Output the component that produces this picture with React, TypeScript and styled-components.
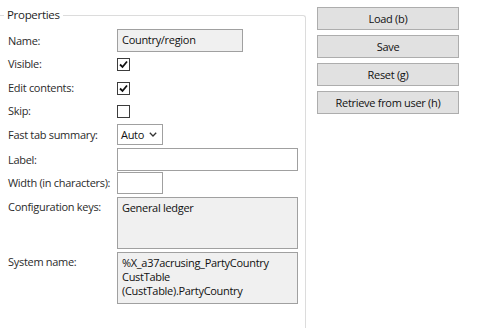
import * as React from 'react'
import styled, { createGlobalStyle } from 'styled-components'

const GlobalStyle = createGlobalStyle`
  html, body {
    margin: 0;
    padding: 0;
    background: #ffffff;
    overflow: hidden;
  }
  body {
    font-family: 'Open Sans', 'Noto Sans', sans-serif;
    font-size: 11px;
    letter-spacing: -0.3px;
    color: #1e1e1e;
  }
`

const Page = styled.div`
  display: flex;
  align-items: flex-start;
  gap: 11px;
  padding-top: 7px;
  width: 478px;
  height: 328px;
  box-sizing: border-box;
  overflow: hidden;
`

const Group = styled.fieldset`
  margin: 0;
  padding: 0 0 0 8px;
  width: 306px;
  height: 321px;
  box-sizing: border-box;
  border: 1px solid #dcdcdc;
  border-left: none;
  border-bottom: none;
  border-top-right-radius: 3px;
  min-inline-size: 0;
`

const Legend = styled.legend`
  margin-left: -4px;
  padding: 0 3px;
  font-size: 11.5px;
  line-height: 16px;
  color: #1e1e1e;
`

const Row = styled.div<{ $h: number; $mt: number; $top?: boolean }>`
  display: grid;
  grid-template-columns: 109px 1fr;
  align-items: ${(p) => (p.$top ? 'start' : 'center')};
  height: ${(p) => p.$h}px;
  margin-top: ${(p) => p.$mt}px;
`

const Label = styled.span<{ $top?: boolean }>`
  line-height: 14px;
  white-space: nowrap;
  color: #2b2b2b;
  padding-top: ${(p) => (p.$top ? 3 : 0)}px;
`

const TextBox = styled.div<{ $w?: number; $ro?: boolean; $h: number }>`
  box-sizing: border-box;
  width: ${(p) => (p.$w ? `${p.$w}px` : '181px')};
  height: ${(p) => p.$h}px;
  border: 1px solid #a0a0a0;
  background: ${(p) => (p.$ro ? '#f0f0f0' : '#ffffff')};
  padding: 3px 4px 0 4px;
  line-height: 14px;
  color: #111;
`

const Select = styled.div`
  box-sizing: border-box;
  width: 46px;
  height: 21px;
  border: 1px solid #a0a0a0;
  background: #ffffff;
  display: flex;
  align-items: center;
  justify-content: space-between;
  padding: 0 5px 0 3px;
  color: #111;
`

const Box = styled.span`
  box-sizing: border-box;
  width: 13px;
  height: 13px;
  border: 1px solid #3c3c3c;
  background: #ffffff;
  display: flex;
  align-items: center;
  justify-content: center;
`

const Buttons = styled.div`
  display: flex;
  flex-direction: column;
  gap: 5px;
  width: 142px;
`

const Button = styled.button`
  box-sizing: border-box;
  height: 23px;
  margin: 0;
  padding: 0;
  border: 1px solid #adadad;
  background: #e1e1e1;
  font-family: inherit;
  font-size: 11px;
  letter-spacing: inherit;
  color: #111;
`

const CheckBox = ({ checked }: { checked: boolean }) => (
  <Box>
    {checked && (
      <svg width="9" height="9" viewBox="0 0 9 9">
        <path d="M1 4.5 L3.5 7 L8 1.5" fill="none" stroke="#111" strokeWidth="1.8" />
      </svg>
    )}
  </Box>
)

const Chevron = () => (
  <svg width="8" height="5" viewBox="0 0 8 5">
    <path d="M0.8 0.8 L4 4 L7.2 0.8" fill="none" stroke="#333" strokeWidth="1.3" />
  </svg>
)

export default function App() {
  return (
    <>
      <GlobalStyle />
      <Page>
        <Group>
          <Legend>Properties</Legend>
          <Row $h={23} $mt={6}>
            <Label>Name:</Label>
            <TextBox $ro $w={126} $h={23}>Country/region</TextBox>
          </Row>
          <Row $h={24} $mt={0}>
            <Label>Visible:</Label>
            <CheckBox checked />
          </Row>
          <Row $h={24} $mt={0}>
            <Label>Edit contents:</Label>
            <CheckBox checked />
          </Row>
          <Row $h={22} $mt={0}>
            <Label>Skip:</Label>
            <CheckBox checked={false} />
          </Row>
          <Row $h={21} $mt={2}>
            <Label>Fast tab summary:</Label>
            <Select>
              <span>Auto</span>
              <Chevron />
            </Select>
          </Row>
          <Row $h={23} $mt={3}>
            <Label>Label:</Label>
            <TextBox $h={23} />
          </Row>
          <Row $h={22} $mt={1}>
            <Label>Width (in characters):</Label>
            <TextBox $w={46} $h={22} />
          </Row>
          <Row $h={52} $mt={3} $top>
            <Label $top>Configuration keys:</Label>
            <TextBox $ro $h={52}>General ledger</TextBox>
          </Row>
          <Row $h={52} $mt={3} $top>
            <Label $top>System name:</Label>
            <TextBox $ro $h={52}>
              %X_a37acrusing_PartyCountry
              <br />
              CustTable
              <br />
              (CustTable).PartyCountry
            </TextBox>
          </Row>
        </Group>
        <Buttons>
          <Button>Load (b)</Button>
          <Button>Save</Button>
          <Button>Reset (g)</Button>
          <Button>Retrieve from user (h)</Button>
        </Buttons>
      </Page>
    </>
  )
}
